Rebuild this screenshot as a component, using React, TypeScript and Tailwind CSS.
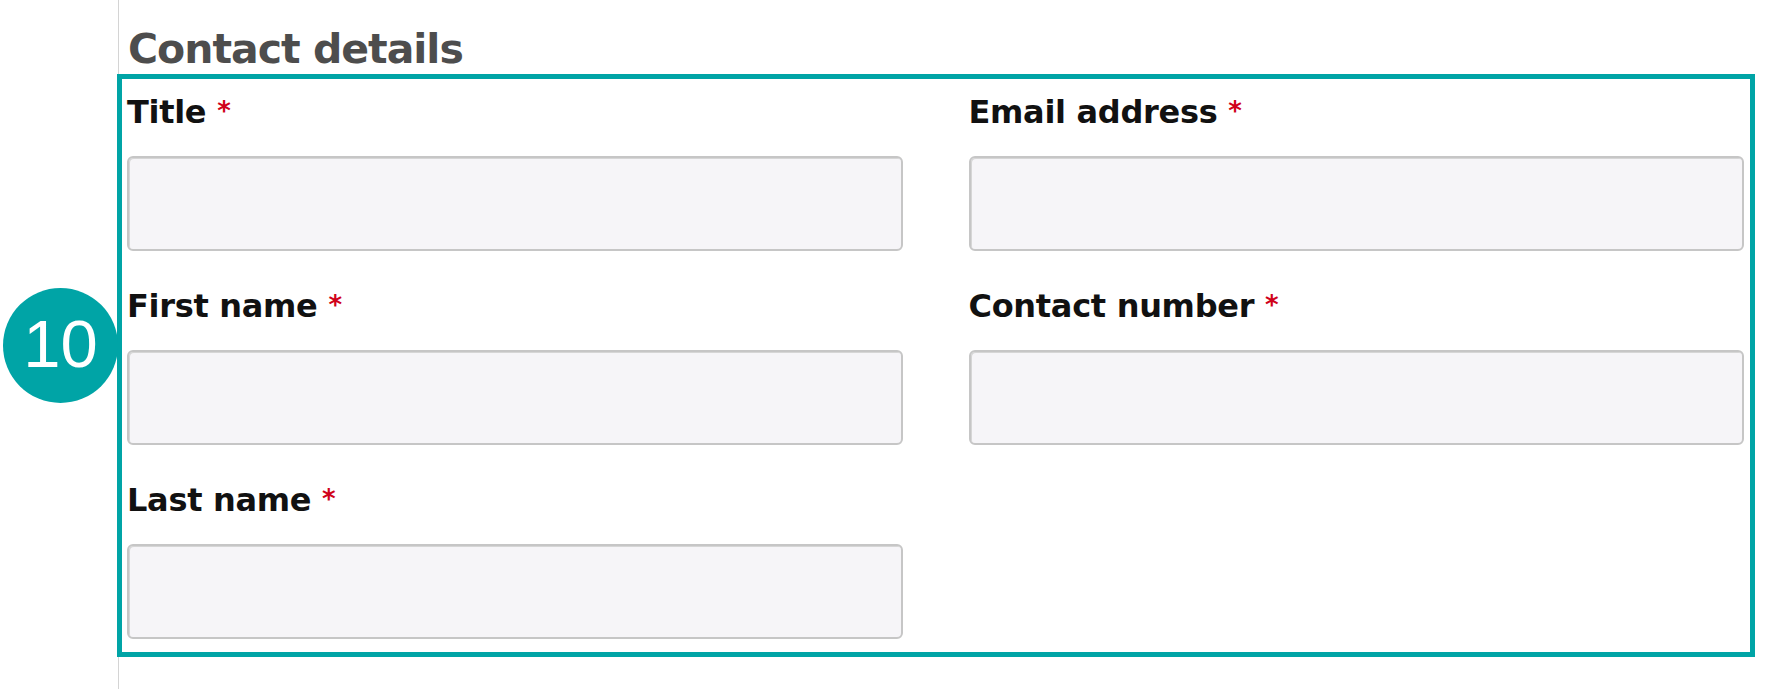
import React from 'react';

const fields = [
    { label: 'Title' },
    { label: 'Email address' },
    { label: 'First name' },
    { label: 'Contact number' },
    { label: 'Last name' },
];

function Field({ label }: { label: string }) {
    return (
        <div className="flex flex-col">
            <label className="text-[32px] leading-[40px] font-bold text-[#111111] mb-[24px] whitespace-nowrap tracking-[-0.3px]">
                {label}{' '}
                <span className="text-[#d0021b] text-[26px] align-top relative top-[-1px]">*</span>
            </label>
            <input
                type="text"
                className="h-[95px] w-full bg-[#f6f5f8] border-2 border-[#c6c6c6] rounded-[6px] outline-none shadow-[inset_1px_1px_0_#d6d6d6]"
            />
        </div>
    );
}

export default function App() {
    return (
        <div className="relative flex min-h-screen h-[689px] bg-white font-['DejaVu_Sans',sans-serif]">
            {/* Annotation badge */}
            <div className="absolute left-[3px] top-[288px] w-[115px] h-[115px] rounded-full bg-[#00a4a6] flex items-center justify-center z-10">
                <span className="text-white text-[67px] leading-none font-['Liberation_Sans'] pb-[4px]">10</span>
            </div>

            {/* Left gutter */}
            <div className="w-[118px] flex-shrink-0" />

            {/* Content column */}
            <div className="flex-1 border-l border-[#d4d4d4] pt-[25px]">
                <h2 className="pl-[9px] text-[41px] leading-[48px] font-bold tracking-[-1px] text-[#4d4d4d] mb-px">
                    Contact details
                </h2>

                {/* Highlighted form section */}
                <div className="-ml-[2px] mr-[24px] border-[5px] border-[#00a4a6] pl-[5px] pr-[6px] pt-[13px] pb-[13px]">
                    <div className="grid grid-cols-2 gap-x-[66px] gap-y-[35px]">
                        {fields.map((f) => (
                            <Field key={f.label} label={f.label} />
                        ))}
                    </div>
                </div>
            </div>
        </div>
    );
}
